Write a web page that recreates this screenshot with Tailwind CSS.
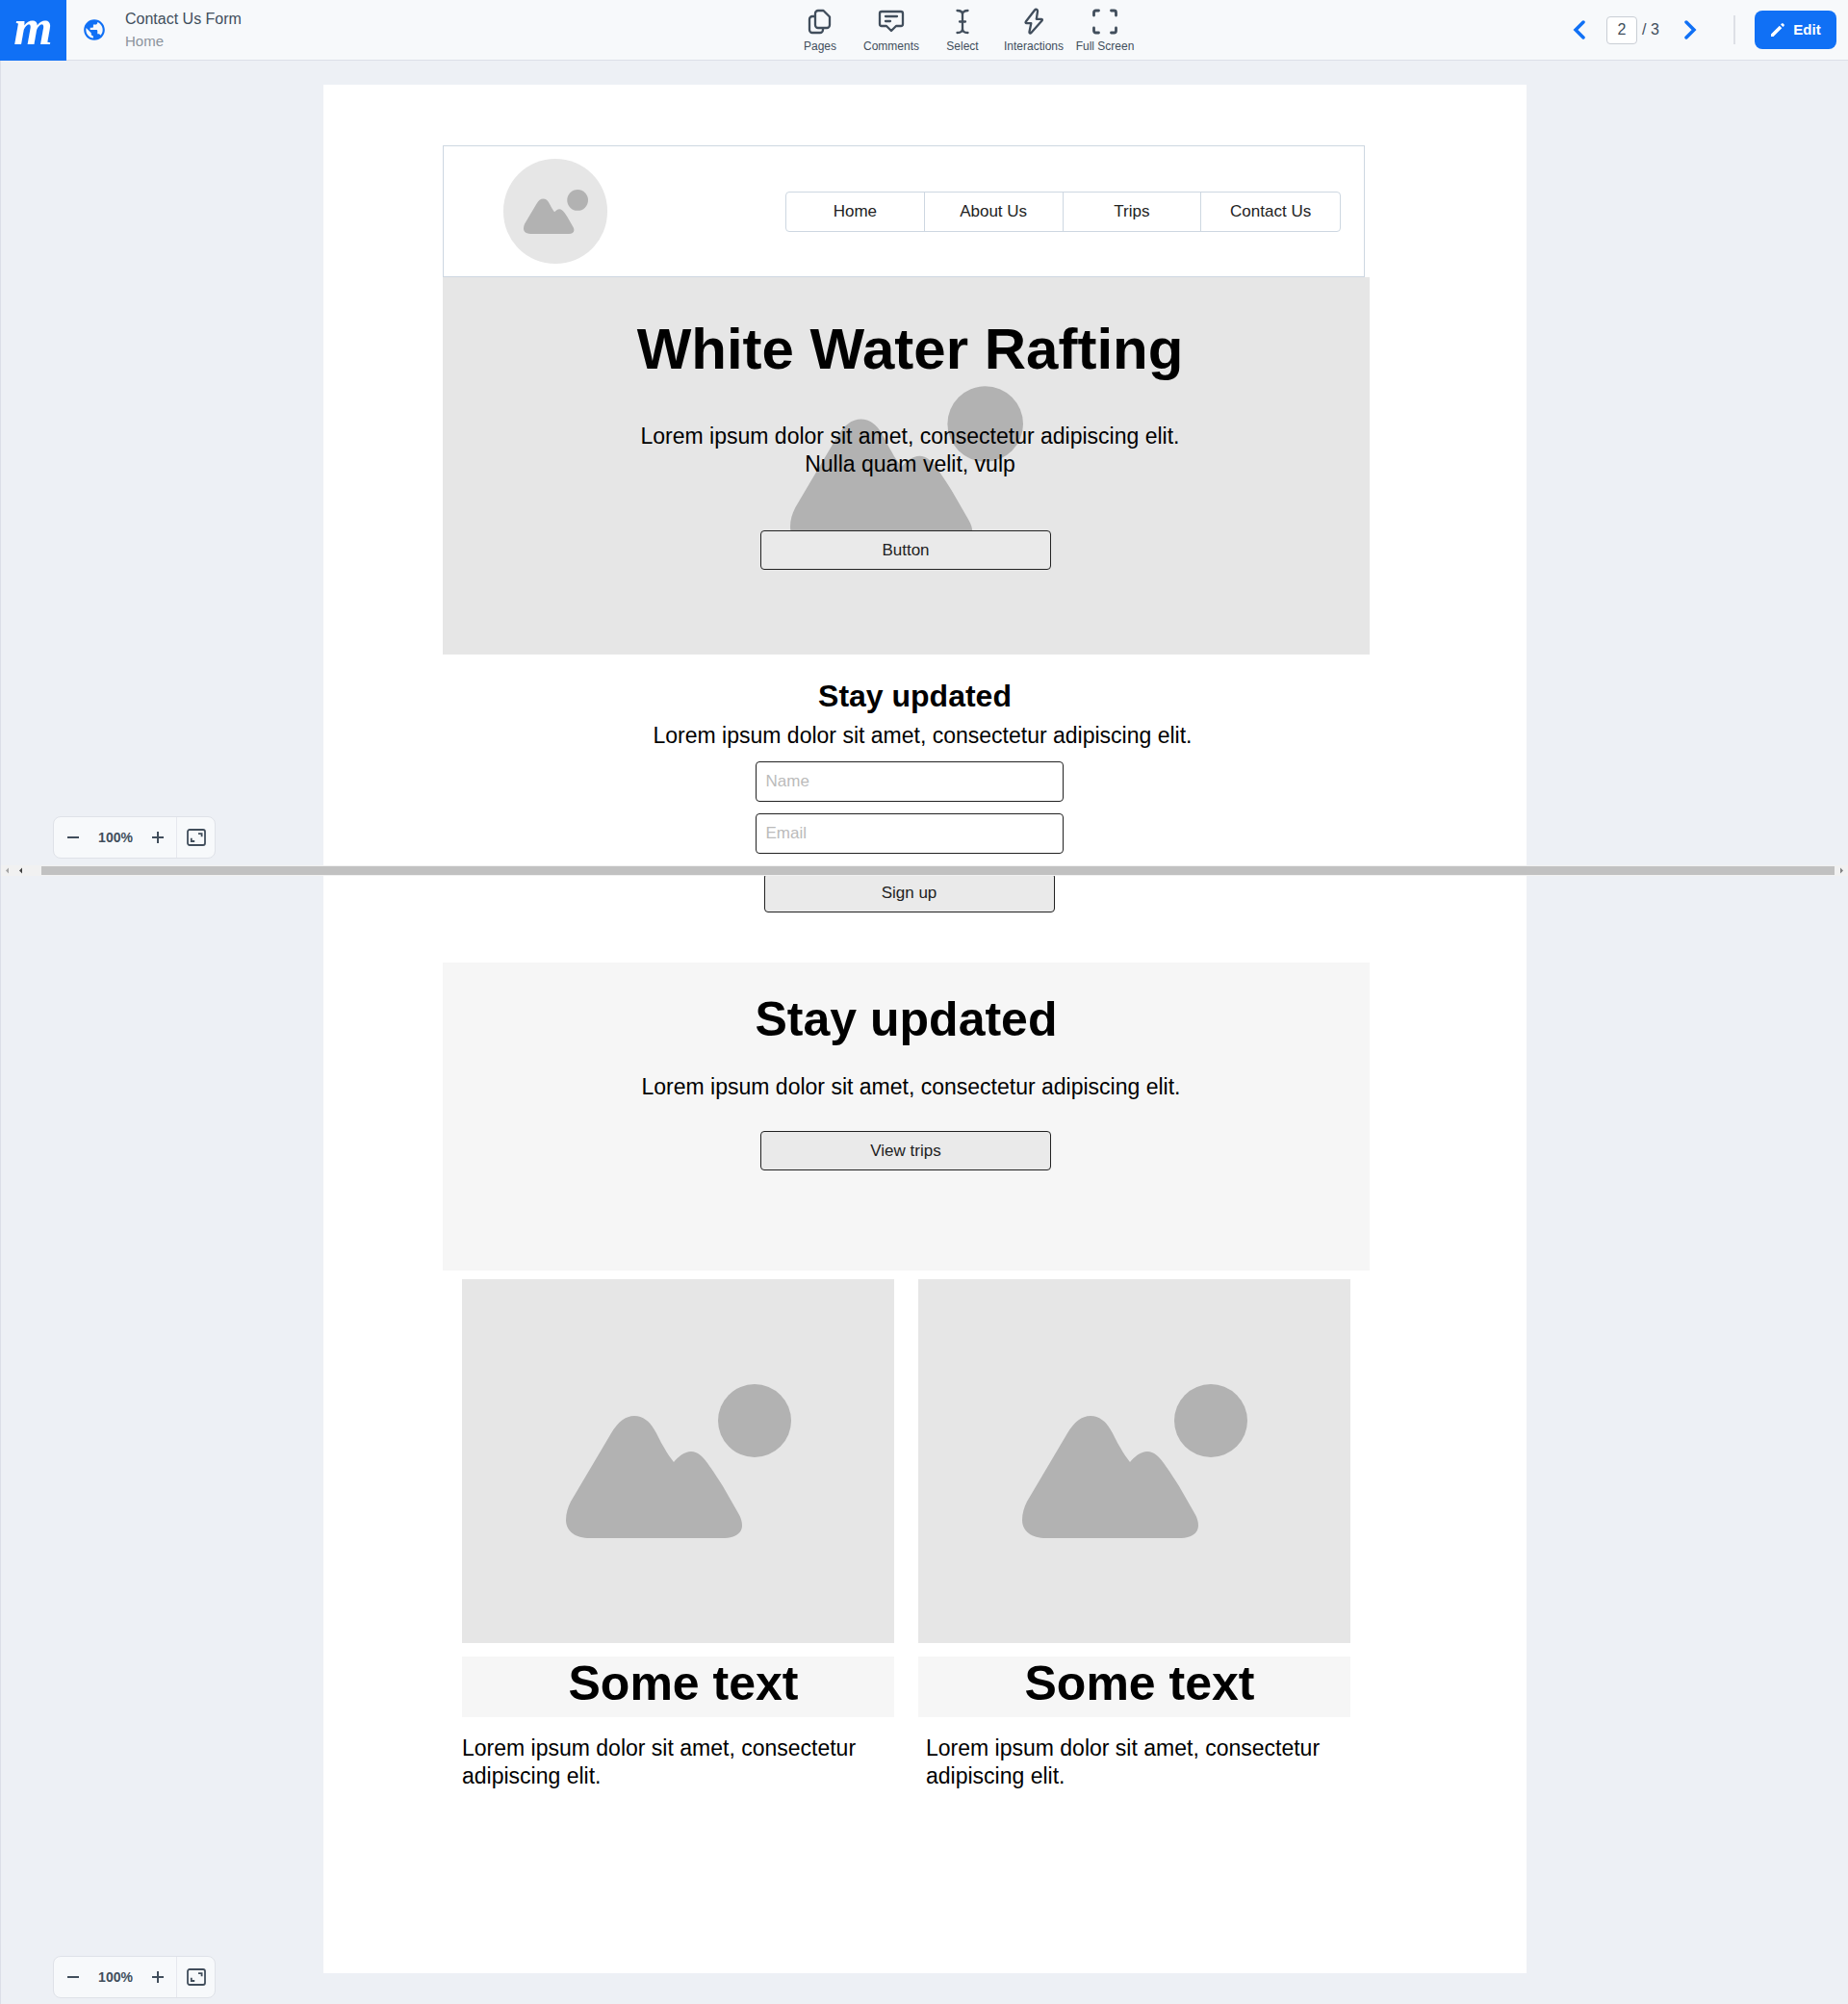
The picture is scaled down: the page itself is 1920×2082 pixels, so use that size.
<!DOCTYPE html>
<html lang="en">
<head>
<meta charset="utf-8">
<title>Contact Us Form</title>
<script src="https://cdn.jsdelivr.net/npm/@tailwindcss/browser@4"></script>
</head>
<body class="flex min-h-screen flex-col bg-[#edf0f5] font-['Liberation_Sans',Arial,sans-serif] text-black">

<svg class="hidden" aria-hidden="true">
  <symbol id="picture" viewBox="0 0 234 160">
    <circle cx="196" cy="38" r="38"/>
    <path d="M5 122 47 51C54 39 62 33 71 33 80 33 87 39 91 46 95 52 98 60 102 66 105 72 109 77 112 81 117 75 123 70 130 70 137 70 142 75 147 82 152 89 158 98 163 106L179 134C182 139 183 143 183 147 183 155 175 160 165 160H25C10 160 0 153 0 141 0 134 2 128 5 122Z"/>
  </symbol>
  <symbol id="fit" viewBox="0 0 20 18">
    <rect x="1" y="1" width="18" height="16" rx="2" fill="none" stroke="currentColor" stroke-width="1.8"/>
    <path d="M12 5.2h3.600v3M4.800 9.800v3.200h3.400" fill="none" stroke="currentColor" stroke-width="1.800"/>
  </symbol>
</svg>

<header class="flex h-[63px] items-center border-b border-[#dcdfe8] bg-[#f7f9fb] text-[#414e5c]">
  <div class="flex flex-1 items-center">
    <a href="#" aria-label="Dashboard" class="flex h-[63px] w-[69px] items-center justify-center bg-[#1070f5] pb-1 font-['Liberation_Serif',serif] text-[52px] leading-[58px] font-bold text-white italic">m</a>
    <svg class="ml-4 size-[26px] text-[#1070f5]" viewBox="0 0 24 24" fill="currentColor"><path d="M12 2C6.480 2 2 6.480 2 12s4.480 10 10 10 10-4.480 10-10S17.520 2 12 2zm-1 17.930c-3.950-.490-7-3.850-7-7.930 0-.620.080-1.210.210-1.790L9 15v1c0 1.100.900 2 2 2v1.930zm6.900-2.540c-.260-.810-1-1.390-1.900-1.390h-1v-3c0-.550-.450-1-1-1H8v-2h2c.550 0 1-.450 1-1V7h2c1.100 0 2-.900 2-2v-.410c2.930 1.190 5 4.060 5 7.410 0 2.080-.800 3.970-2.100 5.390z"/></svg>
    <div class="ml-[19px]">
      <div class="text-base leading-6">Contact Us Form</div>
      <div class="text-[15px] leading-[22px] text-[#8c949d]">Home</div>
    </div>
  </div>

  <nav class="ml-[92px] grid grid-cols-[repeat(5,74px)] pt-px text-xs" aria-label="Tools">
    <button class="flex flex-col items-center gap-1 whitespace-nowrap">
      <svg class="size-7" viewBox="0 0 28 28" fill="none" stroke="currentColor" stroke-width="2.300" stroke-linejoin="round"><path d="M12 3h5.500l6.500 6.500V18a3 3 0 0 1-3 3h-9a3 3 0 0 1-3-3V6a3 3 0 0 1 3-3zM9 9H6a3 3 0 0 0-3 3v11a3 3 0 0 0 3 3h8a3 3 0 0 0 3-3v-2"/></svg>
      Pages</button>
    <button class="flex flex-col items-center gap-1 whitespace-nowrap">
      <svg class="size-7" viewBox="0 0 28 28" fill="none" stroke="currentColor" stroke-width="2.300" stroke-linejoin="round" stroke-linecap="round"><path d="M4 4h20a2 2 0 0 1 2 2v11a2 2 0 0 1-2 2h-5l-5 5-5-5H4a2 2 0 0 1-2-2V6a2 2 0 0 1 2-2zM8 9h12M8 14h5"/></svg>
      Comments</button>
    <button class="flex flex-col items-center gap-1 whitespace-nowrap">
      <svg class="size-7" viewBox="0 0 28 28" fill="none" stroke="currentColor" stroke-width="2.300" stroke-linecap="round"><path d="M8.500 3C12 3 14 4 14 7c0-3 2-4 5.500-4M14 7v15M8.500 26c3.500 0 5.500-1 5.500-4 0 3 2 4 5.500 4M11 14.500h6"/></svg>
      Select</button>
    <button class="flex flex-col items-center gap-1 whitespace-nowrap">
      <svg class="size-7" viewBox="0 0 28 28" fill="none" stroke="currentColor" stroke-width="2.300" stroke-linejoin="round"><path d="M15 2.500 5.800 14.500c-.500.800-.200 1.700.700 1.700h4.800L9.500 25c-.200 1.600 1 2 1.900 1L22.500 13.500c.700-.900.300-1.700-.700-1.700h-5l1.200-8c.200-1.900-1.800-2.800-3-1.300z"/></svg>
      Interactions</button>
    <button class="flex flex-col items-center gap-1 whitespace-nowrap">
      <svg class="size-7" viewBox="0 0 28 28" fill="none" stroke="currentColor" stroke-width="2.800" stroke-linecap="round"><path d="M2.500 8V5a2 2 0 0 1 2-2h3M20.500 3h3a2 2 0 0 1 2 2v3M25.500 21v3a2 2 0 0 1-2 2h-3M7.500 26h-3a2 2 0 0 1-2-2v-3"/></svg>
      Full Screen</button>
  </nav>

  <div class="flex flex-1 items-center justify-end pr-3">
    <button aria-label="Previous page" class="mr-5 text-[#1070f5]"><svg class="h-5 w-4" viewBox="0 0 16 20" fill="none" stroke="currentColor" stroke-width="3.500" stroke-linecap="round"><path d="M12 2 4 10l8 8"/></svg></button>
    <input aria-label="Page number" value="2" class="h-[29px] w-8 rounded-[4px] border border-[#c9ced5] bg-white text-center text-base">
    <span class="ml-[5px] w-[18px] text-base whitespace-nowrap">/ 3</span>
    <button aria-label="Next page" class="ml-6 text-[#1070f5]"><svg class="h-5 w-4" viewBox="0 0 16 20" fill="none" stroke="currentColor" stroke-width="3.500" stroke-linecap="round"><path d="m4 2 8 8-8 8"/></svg></button>
    <div class="ml-[37px] h-[30px] w-0.5 bg-[#dde0e6]"></div>
    <button class="ml-5 flex h-10 w-[85px] items-center justify-center gap-2 rounded-lg bg-[#1070f5] text-[15px] font-bold text-white">
      <svg class="size-4" viewBox="0 0 16 16" fill="currentColor"><path d="M1 12.500 9.800 3.700l2.500 2.500L3.500 15H1zM11 2.500l1-1c.500-.500 1.200-.500 1.700 0l.800.800c.500.500.500 1.200 0 1.700l-1 1z"/></svg>
      Edit</button>
  </div>
</header>

<main class="relative flex-1 border-l border-[#dcdfe8] pt-[25px] pb-8 pl-px">
  <article class="mx-auto w-full max-w-[1250px] bg-white pt-[63px] pr-[163px] pb-[190px] pl-[124px]">

    <div class="mr-[5px] flex h-[137px] items-center justify-between border border-[#cdd7e1] pr-6 pl-[62px]">
      <div class="flex h-[109px] w-[108px] items-center justify-center rounded-full bg-[#e6e6e6]">
        <svg class="h-[46px] w-[67px] fill-[#b2b2b2]"><use href="#picture"/></svg>
      </div>
      <nav class="grid h-[42px] w-[577px] grid-cols-4 divide-x divide-[#cdd7e1] rounded-[4px] border border-[#cdd7e1] text-[17px] text-[#222]" aria-label="Site">
        <a href="#" class="flex items-center justify-center">Home</a>
        <a href="#" class="flex items-center justify-center">About Us</a>
        <a href="#" class="flex items-center justify-center">Trips</a>
        <a href="#" class="flex items-center justify-center">Contact Us</a>
      </nav>
    </div>

    <section class="relative bg-[#e6e6e6] pt-[45px] pb-[88px] text-center">
      <svg class="absolute inset-0 m-auto h-[166px] w-[242px] fill-[#b2b2b2]"><use href="#picture"/></svg>
      <div class="relative">
        <h1 class="pl-2 text-[60px] leading-none font-bold">White Water Rafting</h1>
        <p class="mt-[46px] pl-2 text-[23px] leading-[29px]">Lorem ipsum dolor sit amet, consectetur adipiscing elit.<br>Nulla quam velit, vulp</p>
        <div class="mt-[54px] pr-px"><button class="block h-[41px] w-[302px] mx-auto rounded-[4px] border border-[#222] bg-[#eaeaea] text-[17px] text-[#222]">Button</button></div>
      </div>
    </section>

    <section class="pt-[23px] pl-1.5 text-center">
      <h2 class="pl-3 text-[32px] leading-10 font-bold">Stay updated</h2>
      <p class="mt-[7px] pl-7 text-[23px] leading-[29px]">Lorem ipsum dolor sit amet, consectetur adipiscing elit.</p>
      <form class="mt-3 flex flex-col items-center">
        <input aria-label="Name" placeholder="Name" class="h-[42px] w-80 rounded-[4px] border border-[#222] px-2.5 pb-px text-[17px] placeholder:text-[#bbb]">
        <input aria-label="Email" type="email" placeholder="Email" class="mt-3 h-[42px] w-80 rounded-[4px] border border-[#222] px-2.5 pb-px text-[17px] placeholder:text-[#bbb]">
        <button type="button" class="mt-5 h-[41px] w-[302px] rounded-[4px] border border-[#222] bg-[#eaeaea] text-[17px] text-[#222]">Sign up</button>
      </form>
    </section>

    <section class="mt-[52px] bg-[#f6f6f6] pt-[29px] pb-[104px] text-center">
      <h2 class="text-[50px] leading-[60px] font-bold">Stay updated</h2>
      <p class="mt-[26px] pl-2.5 text-[23px] leading-[29px]">Lorem ipsum dolor sit amet, consectetur adipiscing elit.</p>
      <div class="mt-[31px] pr-px"><button class="mx-auto block h-[41px] w-[302px] rounded-[4px] border border-[#222] bg-[#eaeaea] text-[17px] text-[#222]">View trips</button></div>
    </section>

    <section class="mt-[9px] grid grid-cols-2 gap-[25px] px-5">
      <div>
        <div class="flex h-[378px] items-center justify-center bg-[#e6e6e6]"><svg class="h-[160px] w-[234px] fill-[#b2b2b2]"><use href="#picture"/></svg></div>
        <h3 class="mt-[14px] bg-[#f6f6f6] pb-[7px] pl-[11px] text-center text-[50px] leading-[56px] font-bold">Some text</h3>
        <p class="mt-[18px] text-[23px] leading-[29px]">Lorem ipsum dolor sit amet, consectetur adipiscing elit.</p>
      </div>
      <div>
        <div class="flex h-[378px] items-center justify-center bg-[#e6e6e6]"><svg class="h-[160px] w-[234px] fill-[#b2b2b2]"><use href="#picture"/></svg></div>
        <h3 class="mt-[14px] bg-[#f6f6f6] pb-[7px] pl-[11px] text-center text-[50px] leading-[56px] font-bold">Some text</h3>
        <p class="mt-[18px] pl-2 text-[23px] leading-[29px]">Lorem ipsum dolor sit amet, consectetur adipiscing elit.</p>
      </div>
    </section>
  </article>

  <!-- Zoom controls and scrollbar float over the canvas -->
  <div class="absolute top-[785px] left-[54px] flex h-11 w-[169px] items-center rounded-lg border border-[#dfe2e8] bg-[#f7f9fb] text-[#414e5c]">
    <button aria-label="Zoom out" class="ml-3.5"><svg class="size-3" viewBox="0 0 12 12" stroke="currentColor" stroke-width="2"><path d="M0 6h12"/></svg></button>
    <span class="w-[76px] text-center text-[14px] font-bold">100%</span>
    <button aria-label="Zoom in"><svg class="size-3" viewBox="0 0 12 12" stroke="currentColor" stroke-width="2"><path d="M0 6h12M6 0v12"/></svg></button>
    <button aria-label="Fit to screen" class="ml-auto flex h-full w-10 items-center justify-center border-l border-[#e6e8ee]"><svg class="h-[18px] w-5"><use href="#fit"/></svg></button>
  </div>
  <div class="absolute inset-x-0 top-[836px] flex h-[11px] items-center bg-[#f1f1f1]">
    <svg class="h-[11px] w-[42px]" viewBox="0 0 42 11"><path d="M8 2.500v6L5 5.500z" fill="#a3a3a3"/><path d="M22 2.500v6L19 5.500z" fill="#404040"/></svg>
    <div class="h-[9px] flex-1 bg-[#c1c1c1]"></div>
    <svg class="h-[11px] w-[14px]" viewBox="0 0 14 11"><path d="M6 2.500v6l3-3z" fill="#808080"/></svg>
  </div>
  <div class="absolute bottom-1.5 left-[54px] flex h-11 w-[169px] items-center rounded-lg border border-[#dfe2e8] bg-[#f7f9fb] text-[#414e5c]">
    <button aria-label="Zoom out" class="ml-3.5"><svg class="size-3" viewBox="0 0 12 12" stroke="currentColor" stroke-width="2"><path d="M0 6h12"/></svg></button>
    <span class="w-[76px] text-center text-[14px] font-bold">100%</span>
    <button aria-label="Zoom in"><svg class="size-3" viewBox="0 0 12 12" stroke="currentColor" stroke-width="2"><path d="M0 6h12M6 0v12"/></svg></button>
    <button aria-label="Fit to screen" class="ml-auto flex h-full w-10 items-center justify-center border-l border-[#e6e8ee]"><svg class="h-[18px] w-5"><use href="#fit"/></svg></button>
  </div>
</main>
</body>
</html>
